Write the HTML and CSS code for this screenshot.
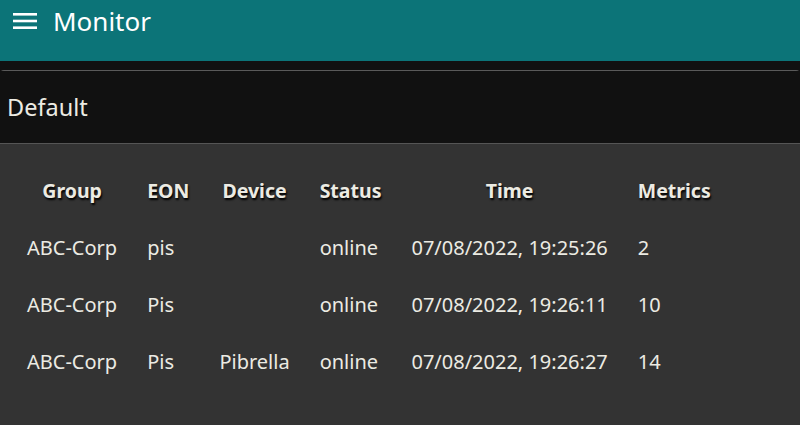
FILE: index.html
```html
<!doctype html>
<html>
<head>
<meta charset="utf-8">
<title>Monitor</title>
<link rel="stylesheet" href="styles.css">
</head>
<body>
<div class="topbar">
	<svg class="menu" width="24" height="18" viewBox="0 0 24 18">
		<rect x="0" y="1" width="24" height="2.6" fill="#fff"/>
		<rect x="0" y="7.7" width="24" height="2.6" fill="#fff"/>
		<rect x="0" y="14.4" width="24" height="2.6" fill="#fff"/>
	</svg>
	<span class="title">Monitor</span>
</div>
<div class="main">
	<div class="card">
		<div class="card-head">Default</div>
		<div class="card-body">
			<table class="grid">
				<tr><th>Group</th><th>EON</th><th>Device</th><th>Status</th><th>Time</th><th>Metrics</th></tr>
				<tr><td>ABC-Corp</td><td>pis</td><td></td><td>online</td><td>07/08/2022, 19:25:26</td><td>2</td></tr>
				<tr><td>ABC-Corp</td><td>Pis</td><td></td><td>online</td><td>07/08/2022, 19:26:11</td><td>10</td></tr>
				<tr><td>ABC-Corp</td><td>Pis</td><td>Pibrella</td><td>online</td><td>07/08/2022, 19:26:27</td><td>14</td></tr>
			</table>
		</div>
	</div>
</div>
</body>
</html>
```
FILE: styles.css
```css
* {margin:0; padding:0; box-sizing:border-box; }
html, body {height:100%; }
body {display:flex; flex-direction:column; background-color:#111; font-family:"Noto Sans",sans-serif; color:#ecebe3; overflow:hidden; }
.topbar {display:flex; align-items:center; flex:0 0 61px; padding:0 0 20px 13px; background-color:#0c7478; color:#fff; }
.menu {margin-right:16px; }
.title {font-size:26px; line-height:1; }
.main {flex:1; display:flex; flex-direction:column; padding-top:9px; min-height:0; }
.card {flex:1; display:flex; flex-direction:column; border-top:1px solid #5a5a5a; border-radius:4px 4px 0 0; }
.card-head {flex:0 0 73px; padding-left:7px; display:flex; align-items:center; font-size:23.5px; background-color:#111; border-bottom:1px solid #555; }
.card-body {flex:1; background-color:#333; padding:18px 12px; }
.grid {border-collapse:collapse; font-size:20px; }
.grid th, .grid td {padding:0 15px; height:57px; white-space:nowrap; }
.grid th {font-size:19.5px; font-weight:bold; text-shadow:1px 2px 2px #000; }
.grid td {text-align:left; }
```
